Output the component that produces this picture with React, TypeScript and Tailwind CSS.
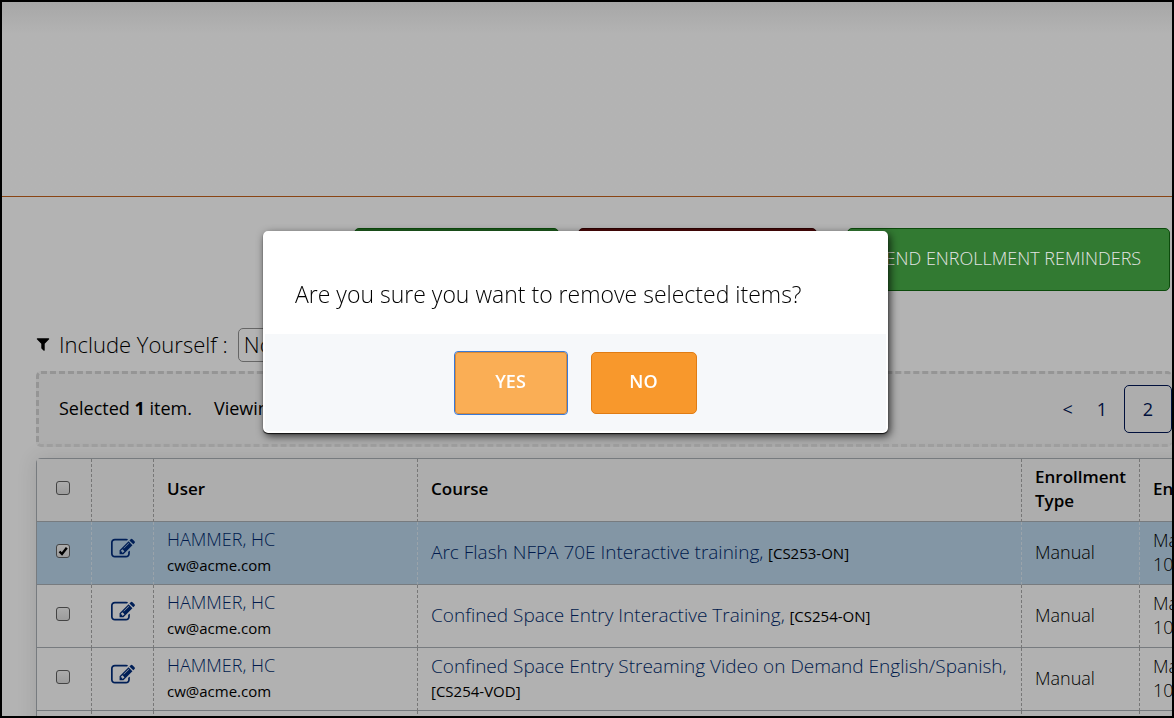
import React from 'react';

const rows = [
  { user: 'HAMMER, HC', email: 'cw@acme.com', course: 'Arc Flash NFPA 70E Interactive training,', code: '[CS253-ON]', type: 'Manual', selected: true },
  { user: 'HAMMER, HC', email: 'cw@acme.com', course: 'Confined Space Entry Interactive Training,', code: '[CS254-ON]', type: 'Manual', selected: false },
  { user: 'HAMMER, HC', email: 'cw@acme.com', course: 'Confined Space Entry Streaming Video on Demand English/Spanish,', code: '[CS254-VOD]', type: 'Manual', selected: false },
];

const FilterIcon = () => (
  <svg viewBox="0 0 1792 1792" className="-ml-px w-4 h-4 fill-black" aria-hidden="true">
    <path d="M1595 295q17 41-14 70l-493 493v742q0 42-39 59-13 5-25 5-27 0-45-19l-256-256q-19-19-19-45v-486l-493-493q-31-29-14-70 17-39 59-39h1280q42 0 59 39z" />
  </svg>
);

const EditIcon = () => (
  <svg viewBox="0 0 1792 1792" className="w-6 h-6 fill-[#001f57]" aria-hidden="true">
    <path d="M888 1184l116-116-152-152-116 116v56h96v96h56zm440-720q-16-16-33 1l-350 350q-17 17-1 33t33-1l350-350q17-17 1-33zm80 594v190q0 119-84.5 203.5t-203.5 84.5h-832q-119 0-203.5-84.5t-84.5-203.5v-832q0-119 84.5-203.5t203.5-84.5h832q63 0 117 25 15 7 18 23 3 17-9 29l-49 49q-14 14-32 8-23-6-45-6h-832q-66 0-113 47t-47 113v832q0 66 47 113t113 47h832q66 0 113-47t47-113v-126q0-13 9-22l64-64q15-15 35-7t20 29zm-96-738l288 288-672 672h-288v-288zm444 132l-92 92-288-288 92-92q28-28 68-28t68 28l152 152q28 28 28 68t-28 68z" />
  </svg>
);

const Checkbox = ({ label, checked = false }: { label: string; checked?: boolean }) => (
  <span className="relative block w-[14px] h-[14px]">
    <input
      type="checkbox"
      aria-label={label}
      defaultChecked={checked}
      className="peer appearance-none block w-[14px] h-[14px] rounded-[3px] border border-[#444] bg-linear-to-b from-[#acacac] to-[#9c9c9c]"
    />
    <svg viewBox="0 0 14 14" className="hidden peer-checked:block absolute inset-0 w-[14px] h-[14px] pointer-events-none" aria-hidden="true">
      <path d="M3.5 7.5 L6 10 L10.8 3.8" fill="none" stroke="#000" strokeWidth="2.4" />
    </svg>
  </span>
);

const Dialog = () => (
  <div className="fixed inset-0 flex items-start justify-center pt-[231px] pr-[23px]">
    <div role="dialog" aria-modal="true" aria-labelledby="dialog-title" className="w-[625px] rounded-[5px] border-2 border-white bg-white overflow-hidden shadow-[0_1px_1px_#111,2px_3px_8px_rgba(0,0,0,0.75)]">
      <p id="dialog-title" className="h-[101px] px-[30px] pt-[45px] text-[23px] leading-8 text-black">
        Are you sure you want to remove selected items?
      </p>
      <div className="h-[97px] bg-[#f6f8fa] flex justify-center gap-6 pt-[18px]">
        <button className="w-[112px] h-[62px] rounded-[3px] bg-[#faae55] border border-[#d98a35] outline-1 outline-[#3b7ad6] text-white text-[18px] font-semibold pb-1">YES</button>
        <button className="w-[106px] h-[62px] rounded-[5px] bg-[#f8982c] border border-[#e07c14] text-white text-[18px] font-semibold pb-1">NO</button>
      </div>
    </div>
  </div>
);

export default function App() {
  const cell = 'border-r [border-right-style:dashed] border-b border-b-[#777b7f] px-[13px] pb-[2px] text-left align-middle';

  return (
    <div className="h-screen overflow-hidden border-2 border-black bg-[#b3b3b3] text-black font-light font-['Open_Sans','Noto_Sans',sans-serif]">
      <header className="h-[195px] border-b border-[#8a4514] bg-linear-to-b from-[#a7a7a7] to-[#b3b3b3] to-[32px]" />

      <div className="flex justify-end pt-[31px] pr-[2px] h-[94px]">
        <button aria-label="Enroll" className="w-[205px] mr-[19px] h-[63px] rounded-[5px] bg-[#1d5a1d] border border-[#0c4a0c]" />
        <button aria-label="Remove" className="w-[239px] mr-[30px] h-[63px] rounded-[5px] bg-[#4a0808] border border-[#2c0303]" />
        <button className="w-[323px] h-[63px] pb-[2px] rounded-[5px] bg-[#327a32] border border-[#0c4a0c] text-[18px] text-[#e4e4e4]">SEND ENROLLMENT REMINDERS</button>
      </div>

      <main className="pl-[34px] pt-[37px]">
        <div className="flex items-center h-[34px] pb-[2px]">
          <FilterIcon />
          <label htmlFor="include" className="ml-2 mr-[10px] text-[22px] leading-8">Include Yourself :</label>
          <select id="include" className="appearance-none w-20 h-[34px] mt-[2px] px-[5px] pb-[2px] rounded-[5px] border border-[#666] text-[22px] leading-7">
            <option>No</option>
            <option>Yes</option>
          </select>
        </div>

        <div className="mt-[9px] h-[76px] flex items-center justify-between rounded-[5px] border-[3px] border-dashed border-[#959595] border-b-[#a0a0a0] border-r-0 bg-[#adadad] pl-5">
          <p className="text-[18px] pb-[2px] font-normal">
            Selected <b className="font-bold">1</b> item.<span className="ml-[22px]">Viewing</span>
          </p>
          <nav className="flex items-center text-[18px] font-normal text-[#00103c]">
            <a href="#prev" className="px-3">&lt;</a>
            <a href="#1" className="px-3 mr-[5px]">1</a>
            <a href="#2" className="w-12 h-12 flex items-center justify-center rounded-[5px] border border-[#00103c]">2</a>
          </nav>
        </div>

        <table className="mt-[11px] w-[calc(100%+69px)] table-fixed border-separate border-spacing-0 rounded-tl-[5px] border-t border-l border-[#777b7f] bg-[#b1b1b1] shadow-[0_0_20px_rgba(0,0,0,0.12)]">
          <colgroup>
            <col className="w-[55px]" />
            <col className="w-[62px]" />
            <col className="w-[264px]" />
            <col />
            <col className="w-[118px]" />
            <col className="w-[101px]" />
          </colgroup>
          <thead>
            <tr className="h-[63px] bg-[#adadad] text-[17px] leading-6">
              <th className={`${cell} border-r-[#777] pl-[19px]`}><div className="pb-[2px]"><Checkbox label="Select all" /></div></th>
              <th className={`${cell} border-r-[#777]`} />
              <th className={`${cell} border-r-[#777] font-semibold`}>User</th>
              <th className={`${cell} border-r-[#777] font-semibold`}>Course</th>
              <th className={`${cell} border-r-[#777] font-semibold`}>Enrollment Type</th>
              <th className={`${cell} border-r-[#777] font-semibold`}>Enrolled</th>
            </tr>
          </thead>
          <tbody>
            {rows.map((row, i) => {
              const td = `${cell} ${row.selected ? 'border-r-[#9aa3aa]' : 'border-r-[#777]'}`;
              return (
                <tr key={i} className={`h-[63px] text-[18px] leading-6 ${row.selected ? 'bg-[#8396a5]' : ''}`}>
                  <td className={`${td} pl-[19px]`}><div className="pb-[2px]"><Checkbox label={`Select row ${i + 1}`} checked={row.selected} /></div></td>
                  <td className={`${td} pl-[19px]`}>
                    <a href="#edit" aria-label="Edit" className="block pb-[6px]"><EditIcon /></a>
                  </td>
                  <td className={td}>
                    <a href="#user" className="block text-[#001a4c]">{row.user}</a>
                    <span className="block pt-[2px] text-[15px] leading-6 font-normal">{row.email}</span>
                  </td>
                  <td className={td}>
                    <a href="#course" className="text-[19px] text-[#001a4c]">{row.course}</a>{' '}
                    <span className="text-[15px] font-normal">{row.code}</span>
                  </td>
                  <td className={td}>{row.type}</td>
                  <td className={`${td} whitespace-nowrap`}>May 14<br />10:24</td>
                </tr>
              );
            })}
            <tr className="h-[63px]">
              <td className={`${cell} border-r-[#777]`} />
              <td className={`${cell} border-r-[#777]`} />
              <td className={`${cell} border-r-[#777]`} />
              <td className={`${cell} border-r-[#777]`} />
              <td className={`${cell} border-r-[#777]`} />
              <td className={`${cell} border-r-[#777]`} />
            </tr>
          </tbody>
        </table>
      </main>

      <Dialog />
    </div>
  );
}
